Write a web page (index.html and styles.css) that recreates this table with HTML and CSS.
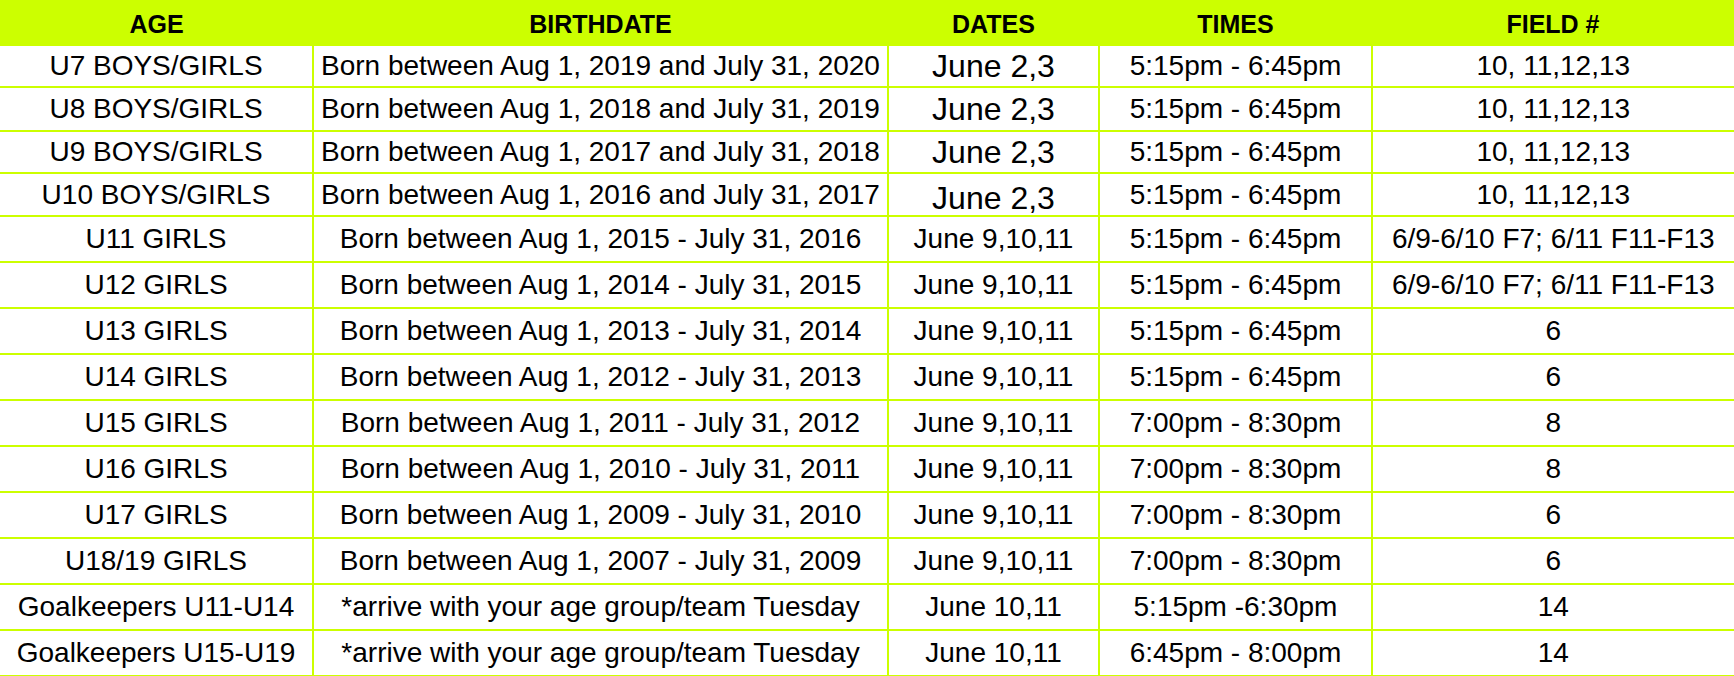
FILE: index.html
```html
<!DOCTYPE html>
<html>
<head>
<meta charset="utf-8">
<link rel="stylesheet" href="styles.css">
</head>
<body>
<table class="schedule">
  <colgroup>
    <col class="c-age"><col class="c-birth"><col class="c-dates"><col class="c-times"><col class="c-field">
  </colgroup>
  <thead>
    <tr class="head"><th>AGE</th><th>BIRTHDATE</th><th>DATES</th><th>TIMES</th><th>FIELD #</th></tr>
  </thead>
  <tbody>
    <tr class="r42"><td>U7 BOYS/GIRLS</td><td>Born between Aug 1, 2019 and July 31, 2020</td><td class="big">June 2,3</td><td>5:15pm - 6:45pm</td><td>10, 11,12,13</td></tr>
    <tr class="r44"><td>U8 BOYS/GIRLS</td><td>Born between Aug 1, 2018 and July 31, 2019</td><td class="big">June 2,3</td><td>5:15pm - 6:45pm</td><td>10, 11,12,13</td></tr>
    <tr class="r42"><td>U9 BOYS/GIRLS</td><td>Born between Aug 1, 2017 and July 31, 2018</td><td class="big">June 2,3</td><td>5:15pm - 6:45pm</td><td>10, 11,12,13</td></tr>
    <tr class="r43"><td>U10 BOYS/GIRLS</td><td>Born between Aug 1, 2016 and July 31, 2017</td><td class="big low">June 2,3</td><td>5:15pm - 6:45pm</td><td>10, 11,12,13</td></tr>
    <tr class="r46"><td>U11 GIRLS</td><td>Born between Aug 1, 2015 - July 31, 2016</td><td>June 9,10,11</td><td>5:15pm - 6:45pm</td><td>6/9-6/10 F7; 6/11 F11-F13</td></tr>
    <tr class="r46"><td>U12 GIRLS</td><td>Born between Aug 1, 2014 - July 31, 2015</td><td>June 9,10,11</td><td>5:15pm - 6:45pm</td><td>6/9-6/10 F7; 6/11 F11-F13</td></tr>
    <tr class="r46"><td>U13 GIRLS</td><td>Born between Aug 1, 2013 - July 31, 2014</td><td>June 9,10,11</td><td>5:15pm - 6:45pm</td><td>6</td></tr>
    <tr class="r46"><td>U14 GIRLS</td><td>Born between Aug 1, 2012 - July 31, 2013</td><td>June 9,10,11</td><td>5:15pm - 6:45pm</td><td>6</td></tr>
    <tr class="r46"><td>U15 GIRLS</td><td>Born between Aug 1, 2011 - July 31, 2012</td><td>June 9,10,11</td><td>7:00pm - 8:30pm</td><td>8</td></tr>
    <tr class="r46"><td>U16 GIRLS</td><td>Born between Aug 1, 2010 - July 31, 2011</td><td>June 9,10,11</td><td>7:00pm - 8:30pm</td><td>8</td></tr>
    <tr class="r46"><td>U17 GIRLS</td><td>Born between Aug 1, 2009 - July 31, 2010</td><td>June 9,10,11</td><td>7:00pm - 8:30pm</td><td>6</td></tr>
    <tr class="r46"><td>U18/19 GIRLS</td><td>Born between Aug 1, 2007 - July 31, 2009</td><td>June 9,10,11</td><td>7:00pm - 8:30pm</td><td>6</td></tr>
    <tr class="r46"><td>Goalkeepers U11-U14</td><td>*arrive with your age group/team Tuesday</td><td>June 10,11</td><td>5:15pm -6:30pm</td><td>14</td></tr>
    <tr class="r46"><td>Goalkeepers U15-U19</td><td>*arrive with your age group/team Tuesday</td><td>June 10,11</td><td>6:45pm - 8:00pm</td><td>14</td></tr>
  </tbody>
</table>
</body>
</html>
```
FILE: styles.css
```css
html, body {
  margin: 0;
  padding: 0;
  background: #ffffff;
  overflow: hidden;
}
.schedule {
  width: 1734px;
  border-collapse: collapse;
  table-layout: fixed;
  font-family: "Liberation Sans", Arial, sans-serif;
  color: #000;
}
.c-age { width: 313px; }
.c-birth { width: 575px; }
.c-dates { width: 211px; }
.c-times { width: 273px; }
.c-field { width: 362px; }

.head th {
  background: #ccff00;
  height: 45px;
  padding: 0;
  font-size: 25px;
  font-weight: bold;
  text-align: center;
  vertical-align: middle;
  border: none;
  border-bottom: 2px solid #ccff00;
  line-height: 1;
  padding-top: 4px;
  box-sizing: border-box;
}
.schedule td {
  border: 2px solid #ccff00;
  padding: 0;
  font-size: 28px;
  text-align: center;
  vertical-align: middle;
  line-height: 1;
  white-space: nowrap;
  overflow: hidden;
}
.schedule td:first-child { border-left: none; }
.schedule td:last-child { border-right: 1px solid #eef9c8; }
.r42 td { height: 40px; }
.r43 td { height: 35px; }
.r44 td { height: 42px; }
.r46 td { height: 44px; }
.schedule td.big { font-size: 32px; }
.schedule td.low { padding-top: 6px; }
```
